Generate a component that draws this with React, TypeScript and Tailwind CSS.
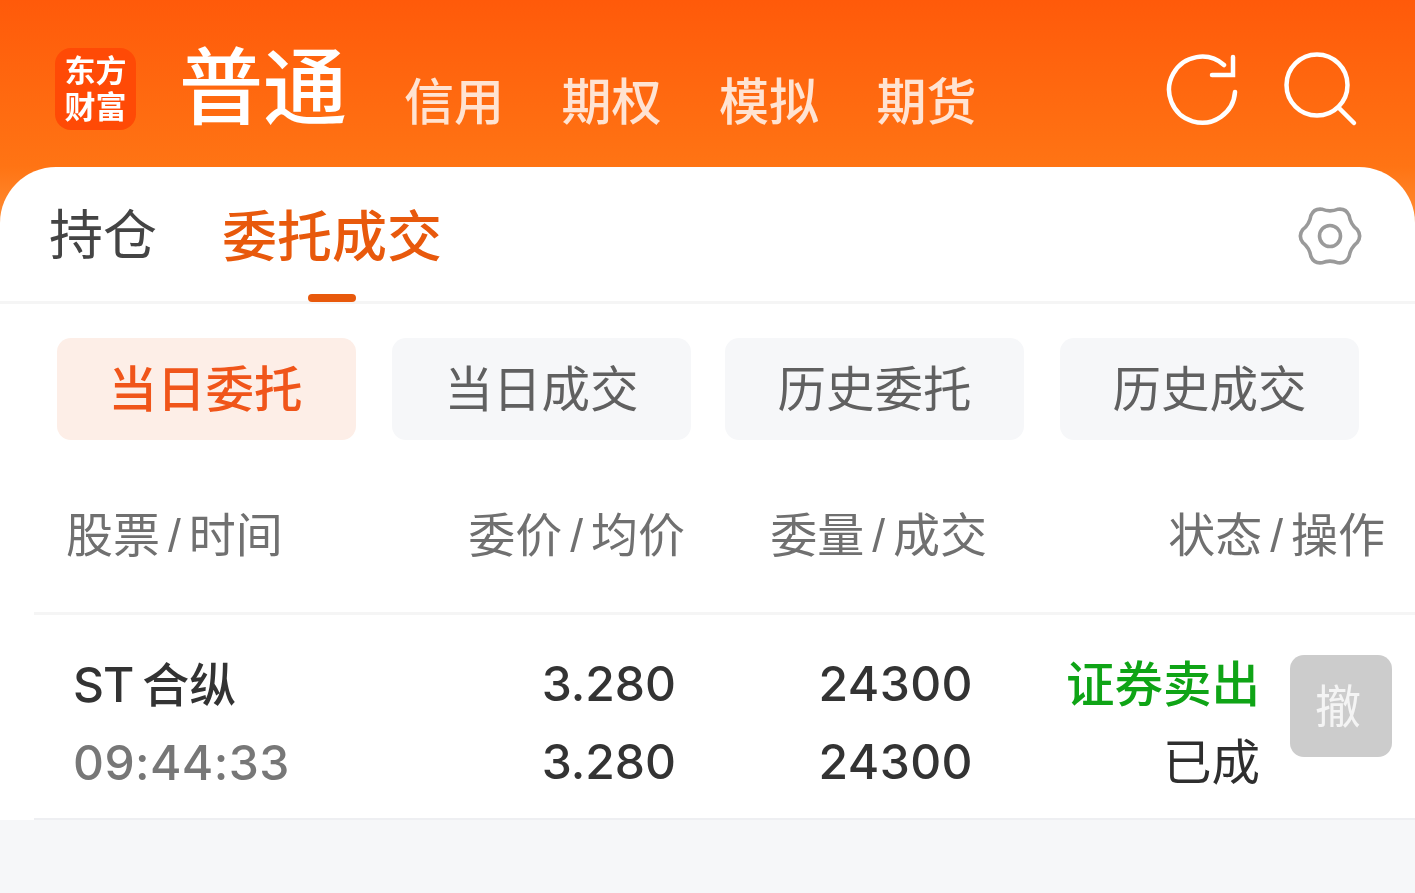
import React from 'react';

const cjk = "font-['Noto_Sans_CJK_SC','Noto_Sans',sans-serif]";
const num = "font-['Inter','Noto_Sans_CJK_SC',sans-serif]";

const RefreshIcon = () => (
  <svg width="76" height="76" viewBox="0 0 76 76" fill="none" stroke="#fff" strokeWidth="4.5" strokeLinecap="round">
    <path d="M71 40a33 33 0 1 1-11-27" />
    <path d="M48 23h21V5" />
  </svg>
);

const SearchIcon = () => (
  <svg width="76" height="76" viewBox="0 0 76 76" fill="none" stroke="#fff" strokeWidth="4.5" strokeLinecap="round">
    <circle cx="33" cy="33" r="30.500" />
    <path d="M55 56l15 15" />
  </svg>
);

// six round lobes (left, right and two each on top and bottom)
const gearPath = () => {
  const pt = (r: number, deg: number) => {
    const a = (deg * Math.PI) / 180;
    return `${(32 + r * Math.cos(a)).toFixed(1)} ${(31 + r * Math.sin(a)).toFixed(1)}`;
  };
  let d = `M${pt(28, -13)}`;
  for (let k = 0; k < 6; k++) {
    const c = k * 60;
    d += ` Q${pt(32, c)} ${pt(28, c + 13)} Q${pt(23.5, c + 30)} ${pt(28, c + 47)}`;
  }
  return d + 'Z';
};

const GearIcon = () => (
  <svg width="64" height="62" viewBox="0 0 64 62" fill="none" stroke="#9a9a9a" strokeWidth="3.6" strokeLinejoin="round">
    <path d={gearPath()} />
    <circle cx="32" cy="31" r="10.500" />
  </svg>
);

const HeaderCell = ({ a, b, className = '' }: { a: string; b: string; className?: string }) => (
  <div className={`text-[47px] leading-none text-[#707070] whitespace-nowrap ${className}`}>
    {a}<span className="mx-[8px] text-[46px] font-['Liberation_Sans',sans-serif]">/</span>{b}
  </div>
);

const subTabs = [
  { label: '当日委托', gap: '' },
  { label: '当日成交', gap: 'ml-[36px]' },
  { label: '历史委托', gap: 'ml-[34px]' },
  { label: '历史成交', gap: 'ml-[36px]' },
];

export default function App() {
  return (
    <div className={`w-[1415px] h-[893px] overflow-hidden bg-[#f6f7f9] blur-[0.7px] ${cjk}`}>
      <div className="bg-[linear-gradient(to_bottom,#ff5a0a_0px,#ff7414_167px,#ff8a30_215px,#ffffff_240px)]">
        <header className="h-[167px] flex items-start pl-[55px]">
          <div className="mt-[48px] w-[81px] h-[82px] pb-[4px] rounded-[16px] bg-[#ff4a06] flex flex-col items-center justify-center text-white font-semibold text-[31px] leading-[36px]">
            <span>东方</span>
            <span>财富</span>
          </div>
          <div className="ml-[43px] mt-[23px] text-[84px] leading-[118px] font-medium text-white whitespace-nowrap">普通</div>
          <nav className="ml-[57px] mt-[62px] flex gap-[57.500px] text-[50px] leading-[72px] font-medium text-[#ffe3d2] whitespace-nowrap">
            <span>信用</span>
            <span>期权</span>
            <span>模拟</span>
            <span>期货</span>
          </nav>
          <div className="ml-auto mr-[55px] mt-[52px] flex gap-[44px]">
            <RefreshIcon />
            <SearchIcon />
          </div>
        </header>

        <div className="h-[137px] rounded-t-[56px] bg-white border-b-[3px] border-[#f5f5f5] flex items-start pl-[49px] pr-[53px]">
          <span className="mt-[26px] text-[54px] leading-[78px] text-[#444]">持仓</span>
          <div className="relative ml-[65px] mt-[26px] h-[109px]">
            <span className="text-[55px] leading-[78px] font-medium text-[#e8590c] whitespace-nowrap">委托成交</span>
            <div className="absolute left-[86px] bottom-0 w-[48px] h-[8px] rounded-full bg-[#e8590c]" />
          </div>
          <div className="ml-auto mt-[38px]">
            <GearIcon />
          </div>
        </div>
      </div>

      <main className="bg-white">
        <div className="pl-[57px] pt-[34px] flex">
          {subTabs.map((tab, i) => (
            <div
              key={tab.label}
              className={
                i === 0
                  ? 'w-[299px] h-[102px] pb-[6px] pr-[2px] rounded-[14px] bg-[#fdeee7] text-[#f0551a] font-medium text-[48.500px] flex items-center justify-center'
                  : `w-[299px] h-[102px] pb-[6px] rounded-[14px] bg-[#f6f7f9] text-[#606060] text-[48.500px] flex items-center justify-center ${tab.gap}`
              }
            >
              {tab.label}
            </div>
          ))}
        </div>

        <div className="pl-[34px]">
          <div className="h-[175px] pt-[14px] border-b-[3px] border-[#f5f5f5] grid grid-cols-[651px_302px_398px] items-center">
            <div className="pl-[32px] flex justify-between">
              <HeaderCell a="股票" b="时间" />
              <HeaderCell a="委价" b="均价" />
            </div>
            <HeaderCell a="委量" b="成交" className="text-right" />
            <HeaderCell a="状态" b="操作" className="text-right" />
          </div>

          <div className={`h-[205px] border-b-[2px] border-[#eeeff2] grid grid-cols-[642px_297px_287px_auto] items-start ${num}`}>
            <div className="pt-[30px] pl-[39px] flex justify-between font-medium text-[48px] leading-[78px]">
              <div className="-mt-[2px]">
                <div className="text-[#333] whitespace-nowrap tracking-[-1px]">
                  ST<span className={`ml-[9px] text-[47px] tracking-normal ${cjk}`}>合纵</span>
                </div>
                <div className="text-[#777] tracking-[0.400px] leading-[77px]">09:44:33</div>
              </div>
              <div className="text-[#333] text-right">
                <div>3.280</div>
                <div>3.280</div>
              </div>
            </div>
            <div className="pt-[30px] text-right font-medium text-[#333] text-[48px] leading-[78px] tracking-[0.400px]">
              <div>24300</div>
              <div>24300</div>
            </div>
            <div className={`pt-[27px] text-right whitespace-nowrap text-[48.500px] leading-[78px] ${cjk}`}>
              <div className="text-[#0fa416] font-medium">证券卖出</div>
              <div className="text-[#2e2e2e]">已成</div>
            </div>
            <div className={`ml-[30px] mt-[40px] w-[102px] h-[102px] pr-[6px] pb-[6px] rounded-[14px] bg-[#cccccc] text-[#f4f4f4] text-[46px] flex items-center justify-center ${cjk}`}>撤</div>
          </div>
        </div>
      </main>
    </div>
  );
}
